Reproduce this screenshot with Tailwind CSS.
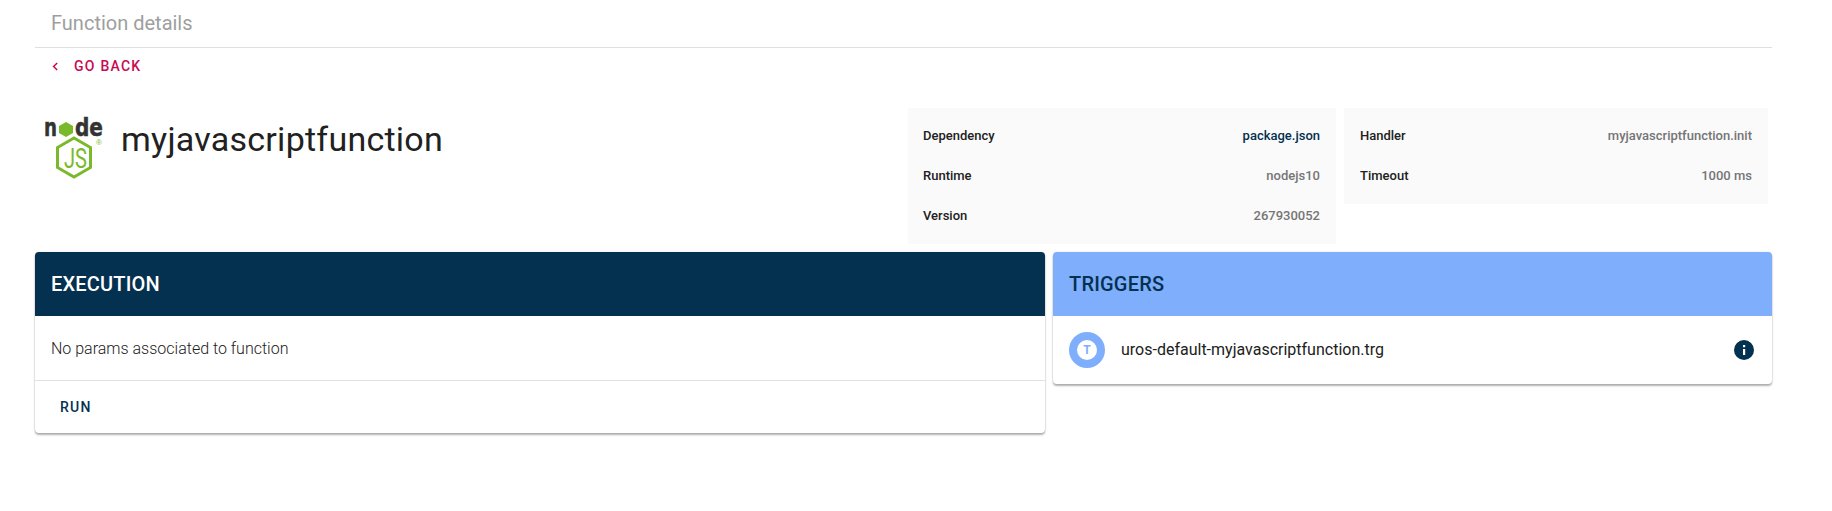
<!DOCTYPE html>
<html lang="en">
<head>
    <meta charset="UTF-8">
    <meta name="viewport" content="width=device-width, initial-scale=1.0">
    <title>Function details</title>
    <script src="https://cdn.jsdelivr.net/npm/@tailwindcss/browser@4"></script>
</head>
<body class="bg-white text-[#212121] font-['Roboto',sans-serif] h-[511px] overflow-hidden">

<div class="pl-[35px] pr-[60px]">

    <!-- Title bar -->
    <div class="h-[48px] border-b border-[#dfdfdf] pl-[16px] pt-[10px]">
        <h2 class="text-[20px] leading-[26px] text-[#9e9e9e]">Function details</h2>
    </div>

    <!-- Go back -->
    <a href="#" class="flex items-center h-[36px] pl-[16px] text-[#c90a52] text-[14px] font-medium tracking-[1.25px]">
        <svg class="w-[9px] h-[9px] mr-[14px]" viewBox="0 0 9 9" fill="none" stroke="currentColor" stroke-width="1.5"><path d="M6.2 1 2.6 4.5l3.6 3.5"/></svg>
        GO BACK
    </a>

    <!-- Function heading and details -->
    <div class="flex mt-[24px] h-[136px]">
        <div class="w-[873px] flex items-start">
            <svg class="w-[64px] h-[76px] ml-[8px] shrink-0" viewBox="0 -8 64 76">
                <g font-family="DejaVu Sans" font-weight="700" font-size="24" fill="#333" stroke="#333" stroke-width="0.5">
                    <text x="1" y="20" textLength="13" lengthAdjust="spacingAndGlyphs">n</text>
                    <text x="32" y="20" textLength="28" lengthAdjust="spacingAndGlyphs">de</text>
                </g>
                <polygon points="23,6 30,10 30,17 23,21 16,17 16,10" fill="#7ab929"/>
                <polygon points="31,22 47.5,31.5 47.5,51.5 31,61 14.5,51.5 14.5,31.5" fill="none" stroke="#7ab929" stroke-width="3"/>
                <text x="21" y="52" font-family="Roboto" font-size="27" fill="#7ab929" textLength="23" lengthAdjust="spacingAndGlyphs">JS</text>
                <text x="53" y="29" font-family="Liberation Sans" font-size="8" fill="#7ab929">®</text>
            </svg>
            <h1 class="text-[34px] leading-[40px] ml-[14px] mt-[11px] tracking-[0.25px]">myjavascriptfunction</h1>
        </div>

        <div class="w-[428px] h-[136px] bg-[#fafafa] pl-[15px] pr-[16px] text-[13px] font-medium shrink-0">
            <div class="flex justify-between items-center h-[40px] mt-[8px]"><span>Dependency</span><a href="#" class="text-[#03314f]">package.json</a></div>
            <div class="flex justify-between items-center h-[40px]"><span>Runtime</span><span class="text-[#757575]">nodejs10</span></div>
            <div class="flex justify-between items-center h-[40px]"><span>Version</span><span class="text-[#757575]">267930052</span></div>
        </div>
        <div class="w-[424px] h-[96px] ml-[8px] bg-[#fafafa] pl-[16px] pr-[16px] text-[13px] font-medium shrink-0">
            <div class="flex justify-between items-center h-[40px] mt-[8px]"><span>Handler</span><span class="text-[#757575]">myjavascriptfunction.init</span></div>
            <div class="flex justify-between items-center h-[40px]"><span>Timeout</span><span class="text-[#757575]">1000 ms</span></div>
        </div>
    </div>

    <!-- Cards -->
    <div class="flex items-start gap-[8px] mt-[8px]">
        <section class="w-[1010px] rounded-[4px] bg-white shadow-[0_2px_2px_rgba(0,0,0,0.3),0_0_2px_rgba(0,0,0,0.12)] overflow-hidden">
            <h3 class="h-[64px] flex items-center px-[16px] bg-[#03314f] text-white text-[20px] font-medium tracking-[0.2px]">EXECUTION</h3>
            <p class="h-[65px] flex items-center px-[16px] pt-[2px] text-[16px] font-light border-b border-[#e0e0e0]">No params associated to function</p>
            <div class="h-[52px] flex items-center pl-[25px]">
                <button class="text-[14px] font-medium tracking-[1.25px] text-[#03314f]">RUN</button>
            </div>
        </section>

        <section class="w-[719px] rounded-[4px] bg-white shadow-[0_2px_2px_rgba(0,0,0,0.3),0_0_2px_rgba(0,0,0,0.12)] overflow-hidden">
            <h3 class="h-[64px] flex items-center px-[16px] bg-[#7eaefc] text-[#03314f] text-[20px] font-medium tracking-[0.2px]">TRIGGERS</h3>
            <div class="h-[68px] flex items-center pl-[16px] pr-[18px]">
                <div class="w-[36px] h-[36px] rounded-full bg-[#7eaefc] flex items-center justify-center shrink-0">
                    <div class="w-[20px] h-[20px] rounded-full bg-white flex items-center justify-center text-[#7eaefc] text-[12px] font-bold">T</div>
                </div>
                <span class="ml-[16px] text-[16px] flex-1 -mt-[1px]">uros-default-myjavascriptfunction.trg</span>
                <svg class="w-[20px] h-[20px]" viewBox="0 0 20 20"><circle cx="10" cy="10" r="10" fill="#03314f"/><rect x="9" y="9" width="2.2" height="6" fill="#fff"/><rect x="9" y="5" width="2.2" height="2.2" fill="#fff"/></svg>
            </div>
        </section>
    </div>
</div>

</body>
</html>
